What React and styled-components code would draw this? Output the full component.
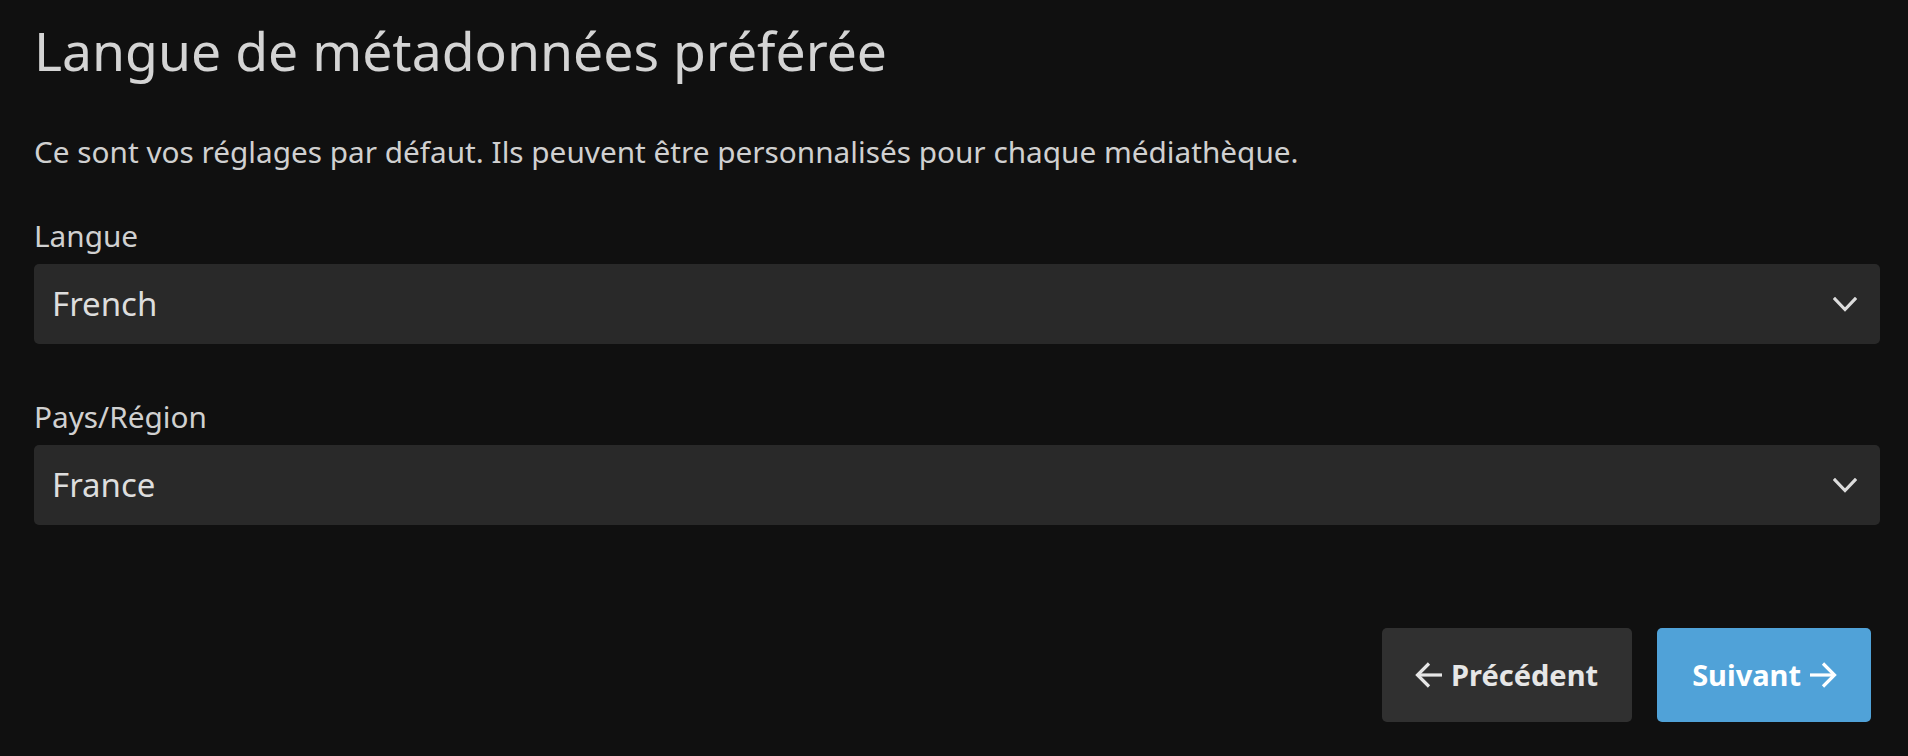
import React from "react";
import styled, { createGlobalStyle } from "styled-components";

const Global = createGlobalStyle`
  html, body { margin: 0; padding: 0; background: #101010; }
  body { font-family: "Noto Sans", "Open Sans", sans-serif; color: #d0d0d0; }
  * { box-sizing: border-box; }
`;

const Page = styled.div`
  min-height: 756px;
  padding: 19px 28px 0 34px;
  display: flex;
  flex-direction: column;
`;

const Title = styled.h1`
  margin: 0;
  font-size: 53.5px;
  line-height: 64px;
  font-weight: 400;
  color: #d4d4d4;
`;

const Description = styled.p`
  margin: 49px 0 0;
  font-size: 29.75px;
  line-height: 40px;
  color: #d0d0d0;
`;

const Field = styled.div`
  display: flex;
  flex-direction: column;
  margin-top: ${(p) => p.$top}px;
`;

const Label = styled.label`
  font-size: 29.75px;
  line-height: 40px;
  color: #d0d0d0;
  margin-bottom: 8px;
`;

const Select = styled.div`
  height: 80px;
  background: #292929;
  border-radius: 5px;
  display: flex;
  align-items: center;
  justify-content: space-between;
  padding: 0 23px 0 18px;
  font-size: 33px;
  line-height: 44px;
  color: #dddddd;
`;

const Chevron = () => (
  <svg width="24" height="15" viewBox="0 0 24 15" fill="none">
    <polyline points="2,2 12,12.5 22,2" stroke="#dcdcdc" strokeWidth="3.2" strokeLinecap="square" />
  </svg>
);

const Actions = styled.div`
  display: flex;
  justify-content: flex-end;
  gap: 25px;
  margin-top: 103px;
  padding-right: 9px;
`;

const Button = styled.button`
  height: 94px;
  padding: 0 34px 0 ${(p) => (p.$primary ? 35 : 33)}px;
  border: none;
  border-radius: 5px;
  display: flex;
  align-items: center;
  gap: 9px;
  font-family: "Noto Sans", "Open Sans", sans-serif;
  font-size: 29px;
  line-height: 40px;
  font-weight: 700;
  background: ${(p) => (p.$primary ? "#50a2d8" : "#303030")};
  color: ${(p) => (p.$primary ? "#ffffff" : "#e6e6e6")};
  cursor: pointer;
`;

const Arrow = ({ dir, color }) => (
  <svg width="27" height="26" viewBox="0 0 27 26" fill="none">
    {dir === "left" ? (
      <>
        <line x1="3" y1="13" x2="27" y2="13" stroke={color} strokeWidth="3.2" />
        <polyline points="14,1.5 2.5,13 14,24.5" stroke={color} strokeWidth="3.2" fill="none" />
      </>
    ) : (
      <>
        <line x1="0" y1="13" x2="24" y2="13" stroke={color} strokeWidth="3.2" />
        <polyline points="13,1.5 24.5,13 13,24.5" stroke={color} strokeWidth="3.2" fill="none" />
      </>
    )}
  </svg>
);

export default function App() {
  return (
    <>
      <Global />
      <Page>
        <Title>Langue de métadonnées préférée</Title>
        <Description>
          Ce sont vos réglages par défaut. Ils peuvent être personnalisés pour chaque médiathèque.
        </Description>
        <Field $top={44}>
          <Label>Langue</Label>
          <Select>
            <span>French</span>
            <Chevron />
          </Select>
        </Field>
        <Field $top={53}>
          <Label>Pays/Région</Label>
          <Select>
            <span>France</span>
            <Chevron />
          </Select>
        </Field>
        <Actions>
          <Button>
            <Arrow dir="left" color="#e6e6e6" />
            Précédent
          </Button>
          <Button $primary>
            Suivant
            <Arrow dir="right" color="#ffffff" />
          </Button>
        </Actions>
      </Page>
    </>
  );
}
